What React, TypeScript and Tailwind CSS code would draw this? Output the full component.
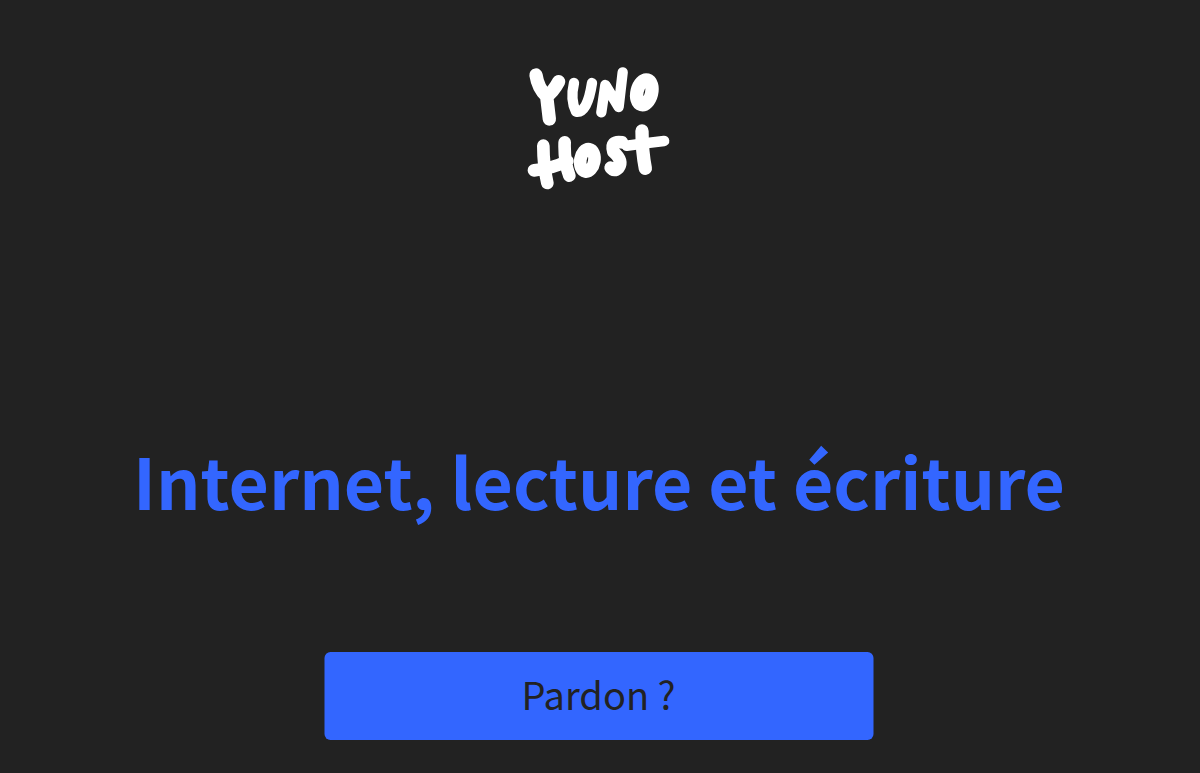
export default function App() {
  return (
    <div className="h-[773px] overflow-hidden bg-[#222222] flex flex-col items-center font-['Noto_Sans_CJK_SC','Noto_Sans',sans-serif]">
      <svg className="mt-[55px] w-[180px] h-[145px] shrink-0 blur-[0.6px]" viewBox="0 0 540 435" fill="none" stroke="white" strokeLinecap="round" strokeLinejoin="round">
        {/* YUNO */}
        <g strokeWidth="40">
          <path d="M78 60 Q84 100 110 124 Q130 110 146 80 M110 124 L118 192" />
          <ellipse cx="403" cy="112" rx="22" ry="38" transform="rotate(14 403 112)" />
        </g>
        <g strokeWidth="31">
          <path d="M192 84 Q180 135 198 170 Q232 176 246 84" />
          <path d="M274 172 L286 90 L326 156 L338 52" />
        </g>
        {/* HOST */}
        <g strokeWidth="38">
          <path d="M100 272 Q100 330 112 384 M164 262 Q162 320 178 362 M72 346 Q130 340 172 318" />
          <ellipse cx="232" cy="316" rx="21" ry="34" transform="rotate(10 232 316)" />
          <path d="M336 262 Q300 256 310 290 Q340 316 326 338 Q312 352 302 338" />
        </g>
        <path d="M350 272 Q410 264 462 258" strokeWidth="32" />
        <path d="M396 228 Q396 290 406 340" strokeWidth="40" />
      </svg>
      <h1 className="mt-[240px] text-[69.6px] leading-[80px] font-bold text-[#3366ff] whitespace-nowrap -translate-x-[1px]">
        Internet, lecture et écriture
      </h1>
      <button className="mt-[132px] w-[549px] h-[88px] pb-[5px] -translate-x-[1.5px] rounded-[6px] bg-[#3366ff] text-[38px] text-[#222222]">
        Pardon ?
      </button>
    </div>
  );
}
